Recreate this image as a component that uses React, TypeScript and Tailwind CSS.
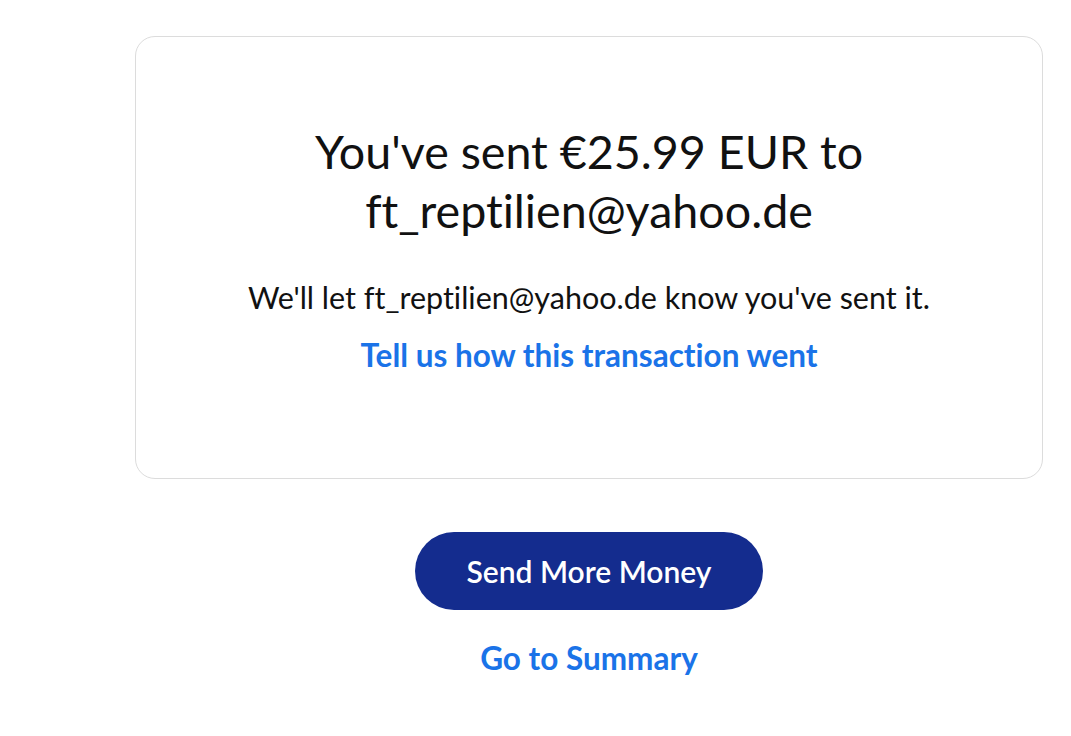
export default function App() {
  return (
    <div className="min-h-screen bg-white [font-variant-ligatures:none]" style={{ fontFamily: "Lato, 'Noto Sans', sans-serif" }}>
      <div className="pl-[135px] pr-[28px] pt-[36px]">
        <div className="h-[443px] rounded-[20px] border border-[#dcdcdc] flex flex-col items-center pt-[85px]">
          <h1 className="text-[46.6px] leading-[59px] text-[#111] text-center font-normal">
            You've sent €25.99 EUR to
            <br />
            ft_reptilien@yahoo.de
          </h1>
          <p className="mt-[39px] text-[30.5px] leading-[36px] text-[#111]">We'll let ft_reptilien@yahoo.de know you've sent it.</p>
          <a className="mt-[22px] text-[31.5px] leading-[36px] font-bold text-[#1a73e8]">Tell us how this transaction went</a>
        </div>
        <div className="flex flex-col items-center pt-[53px]">
          <button className="w-[348px] h-[78px] rounded-full bg-[#142c8e] text-white text-[30px] font-semibold">Send More Money</button>
          <a className="mt-[30px] text-[31.5px] leading-[36px] font-bold text-[#1a73e8]">Go to Summary</a>
        </div>
      </div>
    </div>
  );
}
